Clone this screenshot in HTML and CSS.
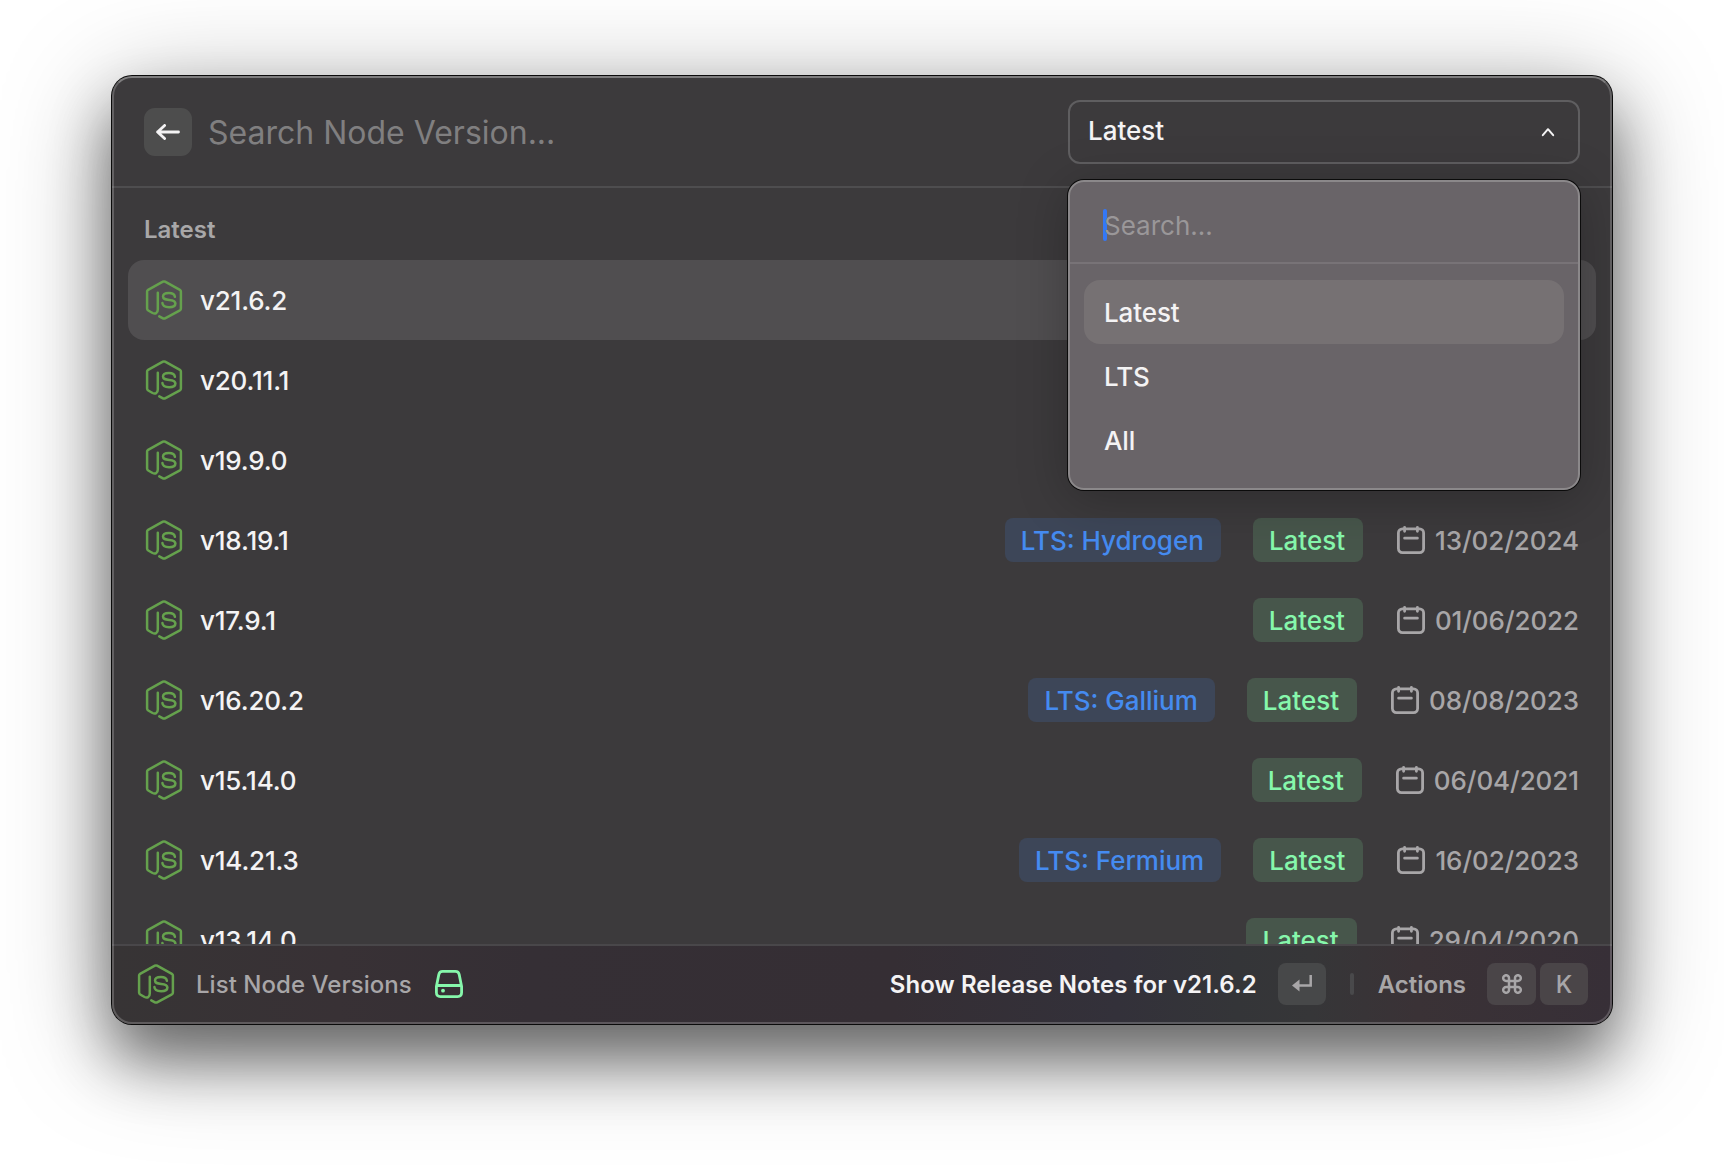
FILE: index.html
```html
<!DOCTYPE html>
<html lang="en">
<head>
<meta charset="utf-8">
<title>List Node Versions</title>
<link rel="stylesheet" href="styles.css">
</head>
<body>
<svg class="defs" width="0" height="0" aria-hidden="true">
  <symbol id="node" viewBox="0 0 40 40">
    <g fill="none" stroke="currentColor" stroke-width="2.500" stroke-linecap="round" stroke-linejoin="round">
      <path d="M13.800 12.800V29.500c0 3.700-2.600 4.800-5.200 3.500L4.200 30.500Q3.100 29.900 3.100 28.500V11.600Q3.100 10.500 4.100 9.900L18.900 1.700Q20 1.100 21.100 1.700L35.900 9.900Q36.900 10.500 36.900 11.600V28.500Q36.900 29.700 35.900 30.300L21.100 38.300Q20 38.900 18.900 38.300L15.300 36.300"/>
      <path d="M30.900 16.800c-.3-2.500-2.300-3.700-6-3.700s-5.900 1.300-5.900 3.500c0 2.400 2.100 2.900 6.200 3.400 4.200.5 6.200 1.200 6.200 3.500 0 2.500-2.300 3.700-6.300 3.700-4.300 0-6.500-1.300-6.700-4.200"/>
    </g>
  </symbol>
  <symbol id="calendar" viewBox="0 0 32 32">
    <g fill="none" stroke="currentColor" stroke-width="2.800" stroke-linecap="round">
      <rect x="3.400" y="4.800" width="25.200" height="23.800" rx="4"/>
      <path d="M9.600 3.300v4M22.400 3.300v4M9.600 14.200h12.800"/>
    </g>
  </symbol>
</svg>

<main class="window">
  <header class="header">
    <button class="back" aria-label="Back">
      <svg width="24" height="16" viewBox="0 0 24 16" fill="none" stroke="currentColor" stroke-width="2.800" stroke-linecap="round" stroke-linejoin="round"><path d="M22.500 8H1.600M8.600 1.400 1.600 8l7 6.600"/></svg>
    </button>
    <div class="query">Search Node Version...</div>
    <div class="picker">
      <div class="select">
        <span>Latest</span>
        <svg width="14" height="10" viewBox="0 0 14 10" fill="none" stroke="currentColor" stroke-width="2" stroke-linecap="round" stroke-linejoin="round"><path d="M1.800 8.200 7 2.200l5.200 6"/></svg>
      </div>
      <div class="menu">
        <div class="menu-search"><span class="caret"></span>Search...</div>
        <ul class="options">
          <li class="option active">Latest</li>
          <li class="option">LTS</li>
          <li class="option">All</li>
        </ul>
      </div>
    </div>
  </header>

  <section class="list">
    <h2 class="heading">Latest</h2>
    <div class="row selected"><svg class="node"><use href="#node"/></svg><span class="version">v21.6.2</span></div>
    <div class="row"><svg class="node"><use href="#node"/></svg><span class="version">v20.11.1</span></div>
    <div class="row"><svg class="node"><use href="#node"/></svg><span class="version">v19.9.0</span></div>
    <div class="row"><svg class="node"><use href="#node"/></svg><span class="version">v18.19.1</span><span class="tag lts">LTS: Hydrogen</span><span class="tag latest">Latest</span><span class="date"><svg><use href="#calendar"/></svg>13/02/2024</span></div>
    <div class="row"><svg class="node"><use href="#node"/></svg><span class="version">v17.9.1</span><span class="tag latest">Latest</span><span class="date"><svg><use href="#calendar"/></svg>01/06/2022</span></div>
    <div class="row"><svg class="node"><use href="#node"/></svg><span class="version">v16.20.2</span><span class="tag lts">LTS: Gallium</span><span class="tag latest">Latest</span><span class="date"><svg><use href="#calendar"/></svg>08/08/2023</span></div>
    <div class="row"><svg class="node"><use href="#node"/></svg><span class="version">v15.14.0</span><span class="tag latest">Latest</span><span class="date"><svg><use href="#calendar"/></svg>06/04/2021</span></div>
    <div class="row"><svg class="node"><use href="#node"/></svg><span class="version">v14.21.3</span><span class="tag lts">LTS: Fermium</span><span class="tag latest">Latest</span><span class="date"><svg><use href="#calendar"/></svg>16/02/2023</span></div>
    <div class="row"><svg class="node"><use href="#node"/></svg><span class="version">v13.14.0</span><span class="tag latest">Latest</span><span class="date"><svg><use href="#calendar"/></svg>29/04/2020</span></div>
  </section>

  <footer class="footer">
    <svg class="node"><use href="#node"/></svg>
    <span class="command">List Node Versions</span>
    <svg class="drive" width="28" height="28" viewBox="0 0 28 28" fill="none" stroke="currentColor" stroke-width="2.800" stroke-linejoin="round"><path d="M1.400 16.500 3.800 4.600Q4.400 1.400 7.600 1.400H20.400Q23.600 1.400 24.200 4.600L26.600 16.500V22.600Q26.600 26.600 22.600 26.600H5.400Q1.400 26.600 1.400 22.600ZM1.800 15.500H26.200"/><circle cx="8" cy="20.700" r="1.900" fill="currentColor" stroke="none"/></svg>
    <span class="primary">Show Release Notes for v21.6.2</span>
    <kbd class="key enter"><svg width="20" height="18" viewBox="0 0 20 18"><path d="M18.700 0V10.500H6" fill="none" stroke="currentColor" stroke-width="2.500"/><path d="M0 10.500 7.500 4.500V16.500Z" fill="currentColor"/></svg></kbd>
    <span class="divider"></span>
    <span class="actions">Actions</span>
    <kbd class="key cmd"><svg width="20" height="20" viewBox="0 0 20 20" fill="none" stroke="currentColor" stroke-width="2.500"><path d="M7 7H4.200A2.900 2.900 0 1 1 7 4.200V15.800A2.900 2.900 0 1 1 4.200 13H15.800A2.900 2.900 0 1 1 13 15.800V4.200A2.900 2.900 0 1 1 15.800 7Z"/></svg></kbd>
    <kbd class="key">K</kbd>
  </footer>
</main>
</body>
</html>
```

FILE: styles.css
```css
* { box-sizing: border-box; }

body {
  margin: 0;
  width: 1724px;
  height: 1172px;
  padding: 76px 112px;
  overflow: hidden;
  background: #fff;
  font-family: Inter, "Liberation Sans", sans-serif;
  font-size: 26px;
  color: #f4f3f4;
}

.defs { position: absolute; }

.window {
  width: 1500px;
  height: 948px;
  display: flex;
  flex-direction: column;
  position: relative;
  border-radius: 20px;
  background: #3c3a3c;
  box-shadow: 0 0 0 1px #0b0b0b, 0 36px 60px rgba(0, 0, 0, .46), 0 20px 110px rgba(0, 0, 0, .36);
}

/* light rim drawn above the content */
.window::after {
  content: "";
  position: absolute;
  inset: 0;
  border: 2px solid rgba(255, 255, 255, .2);
  border-top-color: rgba(255, 255, 255, .34);
  border-radius: 20px;
  pointer-events: none;
}

.header {
  flex: none;
  height: 112px;
  display: flex;
  align-items: center;
  padding: 0 32px;
  border-bottom: 2px solid #4e4d4f;
}

.back {
  width: 48px;
  height: 48px;
  margin-top: 2px;
  padding: 0;
  display: flex;
  align-items: center;
  justify-content: center;
  border: 0;
  border-radius: 11px;
  background: #4d4d4d;
  color: #f4f3f4;
}

.query {
  margin-left: 16px;
  font-size: 32px;
  line-height: 40px;
  padding-top: 3px;
  color: #807f80;
}

.picker {
  position: relative;
  width: 512px;
  margin-left: auto;
  font-weight: 500;
}

.select {
  height: 64px;
  margin-top: 2px;
  display: flex;
  align-items: center;
  justify-content: space-between;
  padding: 0 23px 4px 18px;
  border: 2px solid #5f5e60;
  border-radius: 12px;
}

.select svg { margin-top: 4px; }

.menu {
  position: absolute;
  z-index: 2;
  top: 82px;
  left: 0;
  width: 512px;
  height: 310px;
  border: 2px solid #8b888a;
  border-radius: 16px;
  background: #696468;
  box-shadow: 0 0 0 1px #0b0b0b, 0 8px 50px rgba(0, 0, 0, .25);
}

.menu-search {
  height: 82px;
  display: flex;
  align-items: center;
  padding: 6px 0 0 34px;
  border-bottom: 2px solid #787377;
  font-weight: 400;
  color: #9a9799;
}

.caret {
  width: 4px;
  height: 32px;
  margin: 0 -3px 0 -1px;
  border-radius: 2px;
  background: #3478f6;
}

.options {
  margin: 0;
  padding: 16px 14px;
  list-style: none;
}

.option {
  height: 64px;
  padding-left: 20px;
  line-height: 66px;
  letter-spacing: -.1px;
  border-radius: 16px;
}

.option.active { background: #767173; }

.list {
  flex: 1;
  min-height: 0;
  overflow: hidden;
  padding: 0 16px;
}

.heading {
  height: 72px;
  margin: 0;
  padding: 7px 16px 0;
  font-size: 24px;
  font-weight: 600;
  line-height: 70px;
  color: #a8a7a8;
}

.row {
  height: 80px;
  display: flex;
  align-items: center;
  padding: 0 16px;
  border-radius: 16px;
}

.row.selected { background: #504e50; }

.node {
  flex: none;
  width: 40px;
  height: 40px;
  color: #65a14d;
}

.version {
  margin: 0 auto 0 16px;
  font-weight: 500;
  letter-spacing: -.18px;
}

.tag {
  height: 44px;
  margin-right: 32px;
  padding: 0 17px 0 16px;
  line-height: 45px;
  border-radius: 8px;
  font-weight: 500;
}

.tag.lts { color: #458bf0; background: #3d4658; }
.tag.latest { padding-right: 18px; color: #86f7ab; background: #47564b; }

.date {
  display: flex;
  align-items: center;
  gap: 8px;
  font-weight: 500;
  letter-spacing: -.07px;
  padding-right: 1px;
  color: #a8a6a8;
}

.date svg { width: 32px; height: 32px; }

.footer {
  flex: none;
  height: 80px;
  display: flex;
  align-items: center;
  padding: 0 24px 2px;
  border-top: 2px solid #49474a;
  border-radius: 0 0 20px 20px;
  background: linear-gradient(90deg, #373435 0, #383135 15%, #352f35 28%, #352e34 52%, #33313a 67%, #343538 75%, #363638 80%, #3a3236 87%, #372f37 100%);
  font-size: 24px;
}

.command { margin-left: 20px; font-weight: 500; letter-spacing: .04px; color: #a8a6a8; }
.drive { margin-left: 23px; color: #86f7ab; }
.primary { margin-left: auto; font-weight: 600; letter-spacing: .06px; }

.key {
  width: 48px;
  height: 42px;
  display: flex;
  align-items: center;
  justify-content: center;
  border-radius: 8px;
  background: #4a4548;
  color: #a8a6a8;
  font: 500 24px Inter, "Liberation Sans", sans-serif;
}

.enter { margin-left: 21px; background: #474849; }
.divider { width: 4px; height: 22px; margin: 0 24px; border-radius: 2px; background: #49494b; }
.actions { font-weight: 600; color: #a8a6a8; }
.cmd { width: 49px; margin: 0 4px 0 21px; }
```
